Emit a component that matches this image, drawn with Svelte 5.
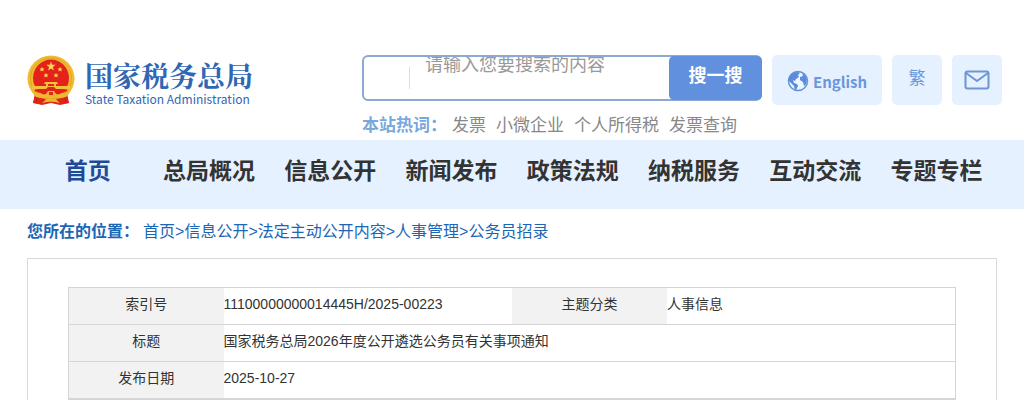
<script>
  const hotWords = ['发票', '小微企业', '个人所得税', '发票查询'];
  const navItems = ['首页', '总局概况', '信息公开', '新闻发布', '政策法规', '纳税服务', '互动交流', '专题专栏'];
  const crumbs = ['首页', '信息公开', '法定主动公开内容', '人事管理', '公务员招录'];

  let keyword = '';
</script>

<header class="header">
  <a class="logo" href="#home">
    <svg class="emblem" viewBox="0 0 48 52" aria-hidden="true">
      <path d="M8 38 L6 48 L15 50 L24 48 L33 50 L42 48 L40 38 Z" fill="#dc2a1c" />
      <ellipse cx="24" cy="23.500" rx="23.500" ry="23" fill="#efbb30" />
      <ellipse cx="24" cy="23.500" rx="20.500" ry="20.500" fill="none" stroke="#d9951f" stroke-width=".6" />
      <ellipse cx="24" cy="23" rx="18" ry="18.500" fill="#e5211b" />
      <path d="M24 6.500 l1.200 3.300 h3.500 l-2.800 2.200 l1 3.400 l-2.900 -2 l-2.900 2 l1 -3.400 l-2.800 -2.200 h3.500 z" fill="#fbd84f" />
      <g fill="#fbd84f">
        <path id="star" d="M15 12 l.8 1.500 h1.700 l-1.300 1.200 l.5 1.700 l-1.700 -1 l-1.700 1 l.5 -1.700 l-1.300 -1.200 h1.700 z" />
        <use href="#star" x="18" />
        <use href="#star" x="4" y="6" />
        <use href="#star" x="14" y="6" />
      </g>
      <path d="M18 27 h12 l1 2 H17 Z M19 29 h2 v2 h-2 z M27 29 h2 v2 h-2 z M5 31 h38 v3 H29 l-2 -2 h-6 l-2 2 H5 z" fill="#f3c038" />
      <path d="M4 36 Q10 41 19 39 L21 36 h6 l2 3 Q38 41 44 36 L39 42 Q33 44 28 43 L24 42 L20 43 Q15 44 9 42 Z" fill="#efb92f" />
      <path d="M8 35 Q14 38 18 37 M40 35 Q34 38 30 37" fill="none" stroke="#e5211b" stroke-width="2" />
      <path d="M22 37 h4 v3 h-4 z" fill="#dc2a1c" />
      <path d="M8 42 L19 44 L15 49 L6 48 Z M40 42 L29 44 L33 49 L42 48 Z" fill="#e0251b" />
      <path d="M15 48 L20 44 H28 L33 48 Q24 45 15 48 Z" fill="#efb92f" />
      <path d="M10 43 L9 48 M38 43 L39 48" stroke="#c61f17" stroke-width="1" />
    </svg>
    <span class="logo-text">
      <span class="logo-name">国家税务总局</span>
      <span class="logo-en">State Taxation Administration</span>
    </span>
  </a>

  <div class="search">
    <form class="search-box" on:submit|preventDefault>
      <span class="divider"></span>
      <input type="text" aria-label="搜索" placeholder="请输入您要搜索的内容" bind:value={keyword} />
      <button type="submit">搜一搜</button>
    </form>
    <div class="hot">
      <strong>本站热词：</strong>
      {#each hotWords as word}
        <a href="#search">{word}</a>
      {/each}
    </div>
  </div>

  <div class="tools">
    <a class="tool english" href="#english">
      <svg width="22" height="22" viewBox="0 0 22 22" aria-hidden="true">
        <circle cx="11" cy="11" r="9.500" fill="#edf5ff" stroke="#6491d8" stroke-width="1.500" />
        <path d="M3 6 Q6 2 11 2 L13 3 L11 5 L12 7 L9 9 L8 11 L6 10 L7 13 L10 14 L11 16 L9 20 Q7 19 7 16 L4 13 L1 10 Z" fill="#5b8bdc" />
        <path d="M15 3 L18 5 L20 9 L19 14 L17 16 L16 12 L13 10 L13 7 L16 6 Z" fill="#5b8bdc" />
      </svg>
      <span>English</span>
    </a>
    <a class="tool small trad" href="#traditional">繁</a>
    <a class="tool small" href="#mail" aria-label="邮箱">
      <svg width="26" height="20" viewBox="0 0 26 20" fill="none" stroke="#6b95d3" stroke-width="2" stroke-linejoin="round" aria-hidden="true">
        <rect x="1.500" y="1.500" width="23" height="17" rx="2" />
        <path d="M2 3 L13 11 L24 3" />
      </svg>
    </a>
  </div>
</header>

<nav class="nav">
  {#each navItems as item, i}
    <a href="#nav" class:active={i === 0}>{item}</a>
  {/each}
</nav>

<main>
  <div class="crumbs">
    <strong>您所在的位置：</strong>
    <span>
      {#each crumbs as crumb, i}{#if i > 0}&gt;{/if}<a href="#crumb">{crumb}</a>{/each}
    </span>
  </div>

  <section class="panel">
    <table>
      <colgroup>
        <col class="col-label" />
        <col class="col-value" />
        <col class="col-label" />
        <col class="col-value" />
      </colgroup>
      <tbody>
        <tr>
          <th scope="row">索引号</th>
          <td>11100000000014445H/2025-00223</td>
          <th scope="row">主题分类</th>
          <td>人事信息</td>
        </tr>
        <tr>
          <th scope="row">标题</th>
          <td colspan="3">国家税务总局2026年度公开遴选公务员有关事项通知</td>
        </tr>
        <tr>
          <th scope="row">发布日期</th>
          <td colspan="3">2025-10-27</td>
        </tr>
      </tbody>
    </table>
  </section>
</main>

<style>
  :global(body) {
    margin: 0;
    background: #fff;
    font-family: 'Liberation Sans', 'Noto Sans CJK SC', sans-serif;
    color: #333;
  }

  a {
    color: inherit;
    text-decoration: none;
  }

  .header {
    display: flex;
    align-items: flex-start;
    padding: 55px 22px 0 27px;
  }

  .logo {
    display: flex;
    flex: 1;
    gap: 10px;
    color: #2f67b5;
  }

  .emblem {
    width: 48px;
    height: 52px;
  }

  .logo-text {
    display: flex;
    flex-direction: column;
    padding-top: 5px;
    white-space: nowrap;
  }

  .logo-name {
    font-family: 'Noto Serif CJK SC', 'Noto Sans CJK SC', serif;
    font-size: 28px;
    font-weight: 700;
    line-height: 30px;
  }

  .logo-en {
    font-family: 'Noto Sans CJK SC', sans-serif;
    font-size: 12px;
    line-height: 18px;
  }

  .search {
    width: 400px;
  }

  .search-box {
    display: flex;
    align-items: flex-start;
    box-sizing: border-box;
    height: 46px;
    border: 2px solid #8ba9d3;
    border-radius: 6px;
  }

  .divider {
    width: 45px;
    height: 22px;
    margin-top: 10px;
    border-right: 1px solid #ddd;
  }

  input {
    flex: 1;
    min-width: 0;
    height: 16px;
    padding: 0 0 0 15px;
    border: 0;
    outline: 0;
    background: none;
    font: 18px/16px 'Liberation Sans', 'Noto Sans CJK SC', sans-serif;
  }

  input::placeholder {
    color: #999;
  }

  .search-box button {
    width: 93px;
    height: 44px;
    margin: -1px -2px;
    padding: 0 0 8px;
    border: 0;
    border-radius: 5px;
    background: #6090de;
    color: #fff;
    font: bold 18px 'Liberation Sans', 'Noto Sans CJK SC', sans-serif;
    cursor: pointer;
  }

  .hot {
    display: flex;
    gap: 10px;
    padding-top: 10px;
    color: #888;
    font-size: 17px;
    line-height: 29px;
    white-space: nowrap;
  }

  .hot strong {
    margin-right: -5px;
    color: #7aa7dc;
  }

  .tools {
    display: flex;
    gap: 10px;
    margin-left: 10px;
  }

  .tool {
    display: flex;
    align-items: center;
    justify-content: center;
    height: 50px;
    border-radius: 5px;
    background: #e5f1ff;
    color: #6b96dc;
  }

  .english {
    gap: 4px;
    box-sizing: border-box;
    width: 110px;
    padding-top: 2px;
    font: bold 15px 'Noto Sans CJK SC', sans-serif;
  }

  .small {
    width: 50px;
  }

  .trad {
    align-items: flex-start;
    font-size: 17px;
    line-height: 47px;
  }

  .nav {
    display: grid;
    grid-template-columns: repeat(8, 1fr);
    height: 69px;
    padding: 0 27px;
    background: #e5f1ff;
    font-size: 23px;
    font-weight: bold;
    line-height: 62px;
    text-align: center;
    white-space: nowrap;
  }

  .nav .active {
    color: #1f4a9a;
  }

  main {
    padding: 0 27px;
  }

  .crumbs {
    display: flex;
    gap: 4px;
    color: #1b66b5;
    font-size: 16px;
    line-height: 45px;
    padding-bottom: 4px;
  }

  .panel {
    padding: 28px 40px;
    border: 1px solid #d9d9d9;
  }

  table {
    width: 100%;
    border: 1px solid #d5d5d5;
    border-bottom-width: 2px;
    border-collapse: collapse;
    table-layout: fixed;
    font-size: 14px;
    line-height: 32px;
  }

  .col-label {
    width: 155px;
  }

  tr {
    border-bottom: 1px solid #d5d5d5;
  }

  tr:last-child {
    border-bottom-width: 2px;
  }

  th,
  td {
    padding: 0 0 4px;
    font-weight: normal;
  }

  th {
    background: #f2f2f2;
    text-align: center;
  }

  td {
    text-align: left;
  }
</style>
